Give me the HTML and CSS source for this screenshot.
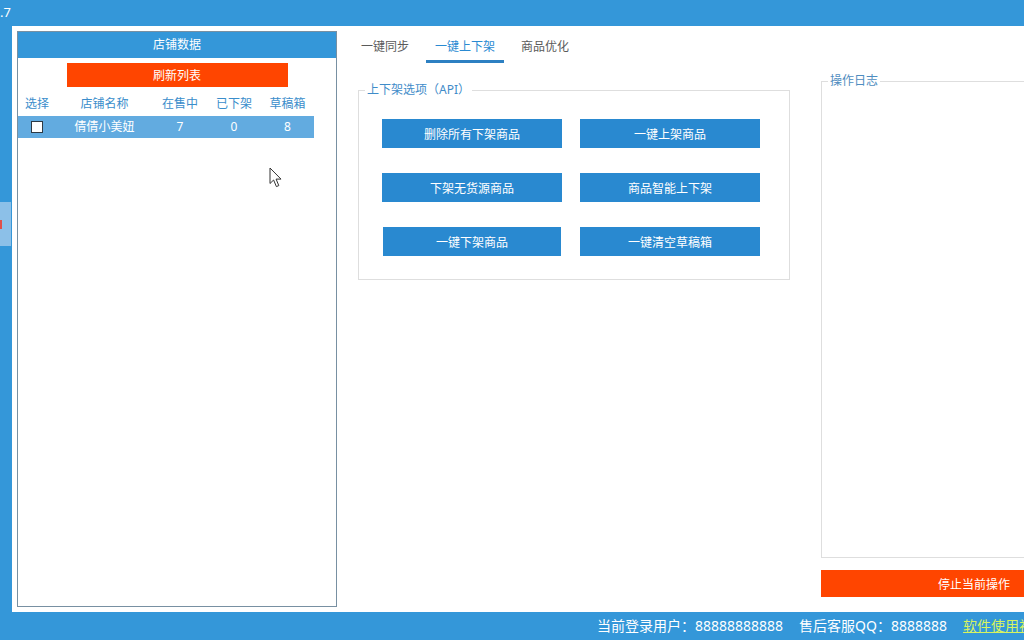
FILE: index.html
```html
<!DOCTYPE html>
<html lang="zh-CN">
<head>
<meta charset="utf-8">
<title>店铺管理</title>
<link rel="stylesheet" href="styles.css">
</head>
<body>
<div class="window">
  <div class="titlebar"><span class="title">.7</span></div>
  <div class="main">
    <div class="sidestrip">
      <div class="sidetab"><span class="sidemark"></span></div>
    </div>
    <div class="content">
      <section class="shop-panel">
        <div class="panel-head">店铺数据</div>
        <button class="btn-refresh">刷新列表</button>
        <div class="shop-table">
          <div class="tr th"><span>选择</span><span>店铺名称</span><span>在售中</span><span>已下架</span><span>草稿箱</span></div>
          <div class="tr row sel"><span><i class="chk"></i></span><span>倩倩小美妞</span><span>7</span><span>0</span><span>8</span></div>
        </div>
      </section>
      <section class="work">
        <nav class="tabs">
          <span class="tab">一键同步</span>
          <span class="tab active">一键上下架</span>
          <span class="tab">商品优化</span>
        </nav>
        <div class="work-body">
          <fieldset class="group">
            <legend>上下架选项（API）</legend>
            <div class="btn-grid">
              <button class="btn">删除所有下架商品</button>
              <button class="btn">一键上架商品</button>
              <button class="btn">下架无货源商品</button>
              <button class="btn">商品智能上下架</button>
              <button class="btn narrow">一键下架商品</button>
              <button class="btn">一键清空草稿箱</button>
            </div>
          </fieldset>
          <div class="log-col">
            <fieldset class="log"><legend>操作日志</legend></fieldset>
            <button class="btn-stop">停止当前操作</button>
          </div>
        </div>
      </section>
    </div>
  </div>
  <div class="statusbar">
    <span>当前登录用户：88888888888</span>
    <span>售后客服QQ：8888888</span>
    <a class="help-link" href="#">软件使用视频教程</a>
  </div>
  <svg class="cursor" width="14" height="22" viewBox="0 0 14 22"><path d="M1 1 L1 16.5 L4.6 13 L7.4 19.6 L9.8 18.6 L7.1 12.1 L12 12.1 Z" fill="#fff" stroke="#333" stroke-width="1" stroke-linejoin="round"/></svg>
</div>
</body>
</html>
```

FILE: styles.css
```css
* { box-sizing: border-box; }

html, body {
  margin: 0;
  padding: 0;
  overflow: hidden;
  background: #3497d9;
}

body {
  font-family: "Noto Sans", "Noto Sans CJK SC", sans-serif;
  font-size: 12px;
  width: 1024px;
  height: 640px;
}

.window {
  position: relative;
  width: 1140px;
  height: 640px;
  display: flex;
  flex-direction: column;
  background: #3497d9;
}

.titlebar {
  height: 26px;
  display: flex;
  align-items: center;
}

.title {
  color: #fff;
  font-size: 13px;
  line-height: 16px;
  margin-top: -2px;
}

.main {
  height: 586px;
  display: flex;
}

.sidestrip {
  width: 12px;
  padding-top: 176px;
}

.sidetab {
  width: 11px;
  height: 44px;
  background: #8cc0e8;
  padding-top: 18px;
}

.sidemark {
  display: block;
  width: 2px;
  height: 9px;
  background: #e0504a;
}

.content {
  flex: 1;
  display: flex;
  background: #fff;
  margin-right: 8px;
}

/* left shop panel */
.shop-panel {
  width: 320px;
  margin: 5px;
  border: 1px solid #7890a2;
  display: flex;
  flex-direction: column;
}

.panel-head {
  height: 26px;
  line-height: 26px;
  background: #3497d9;
  color: #fff;
  text-align: center;
}

.btn-refresh {
  display: block;
  width: 221px;
  height: 24px;
  margin: 5px auto 0;
  border: 0;
  background: #ff4500;
  color: #fff;
  font: inherit;
  padding: 0;
}

.shop-table {
  margin-top: 7px;
  width: 296px;
}

.tr {
  display: grid;
  grid-template-columns: 38px 97px 54px 54px 53px;
  align-items: center;
  text-align: center;
}

.th {
  height: 20px;
  line-height: 20px;
  color: #3a8dcb;
}

.row {
  height: 22px;
  margin-top: 2px;
  line-height: 22px;
  color: #fff;
}

.sel { background: #62abe0; }

.chk {
  display: inline-block;
  width: 12px;
  height: 12px;
  background: #fff;
  border: 1px solid #2d3a44;
  vertical-align: middle;
  margin-top: -2px;
}

/* right work area */
.work {
  flex: 1;
  display: flex;
  flex-direction: column;
  padding: 7px 0 0 10px;
}

.tabs {
  display: flex;
  gap: 8px;
}

.tab {
  padding: 4px 9px 3px;
  line-height: 20px;
  color: #5a5a5a;
  border-bottom: 3px solid transparent;
}

.tab.active {
  color: #2a8ad2;
  border-bottom-color: #2d80c2;
}

.work-body {
  flex: 1;
  display: flex;
  align-items: flex-start;
  padding-left: 6px;
  gap: 31px;
}

fieldset {
  margin: 0;
  padding: 0;
  min-width: 0;
  border: 1px solid #dedede;
}

legend {
  margin-left: 6px;
  padding: 0 2px;
  font-size: 12px;
  line-height: 16px;
}

.group {
  width: 432px;
  margin-top: 19px;
}

.group legend { color: #3f8cc9; }

.btn-grid {
  display: grid;
  grid-template-columns: 180px 180px;
  grid-auto-rows: 29px;
  column-gap: 18px;
  row-gap: 25px;
  padding: 21px 0 23px 23px;
}

.btn {
  border: 0;
  padding: 0;
  background: #2989d0;
  color: #fff;
  font: inherit;
}

.btn.narrow {
  margin: 0 1px;
}

.log-col {
  align-self: stretch;
  width: 306px;
  display: flex;
  flex-direction: column;
  padding: 10px 0 15px;
}

.log {
  flex: 1;
  margin-bottom: 12px;
}

.log legend { color: #4f8dc0; }

.btn-stop {
  height: 27px;
  border: 0;
  padding: 0;
  background: #ff4500;
  color: #fff;
  font: inherit;
}

/* status bar */
.statusbar {
  height: 28px;
  display: flex;
  align-items: center;
  gap: 16px;
  padding-left: 597px;
  color: #fff;
  font-size: 14px;
  line-height: 28px;
  white-space: nowrap;
}

.help-link {
  color: #d8f35e;
  text-decoration: underline;
}

.cursor {
  position: absolute;
  left: 269px;
  top: 167px;
}
```
